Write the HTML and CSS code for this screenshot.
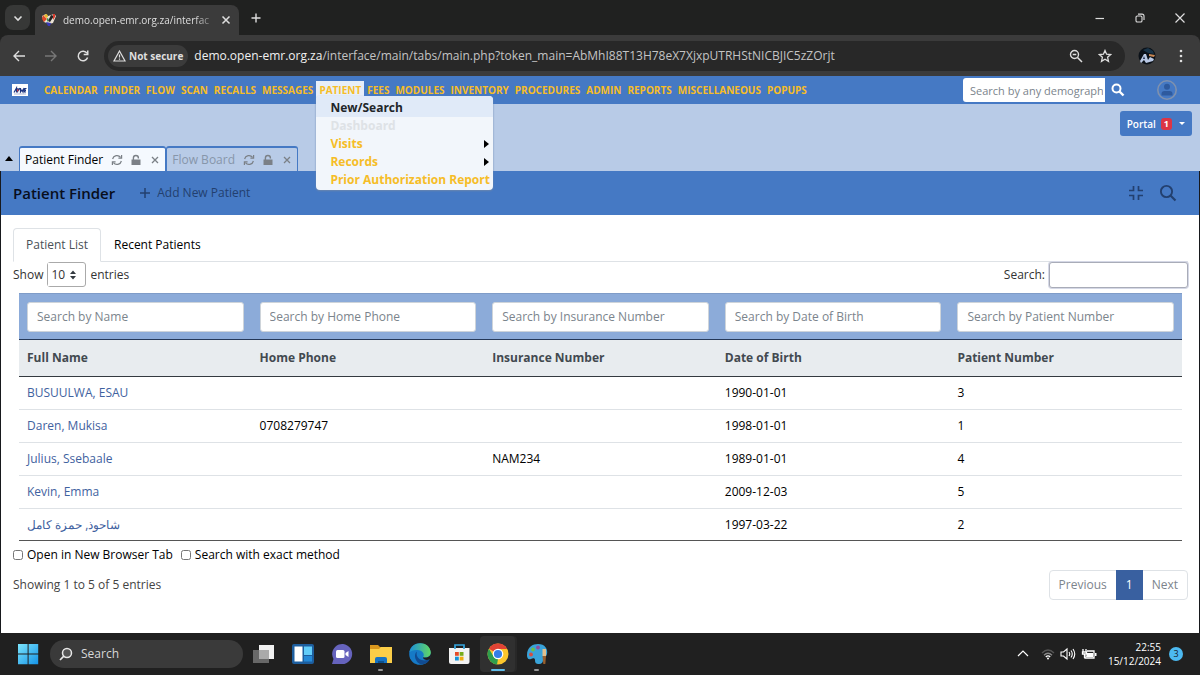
FILE: index.html
```html
<!DOCTYPE html>
<html lang="en">
<head>
<meta charset="utf-8">
<title>OpenEMR - Patient Finder</title>
<link rel="stylesheet" href="styles.css">
</head>
<body>
<svg class="defs" aria-hidden="true">
  <symbol id="i-sync" viewBox="0 0 12 12"><g fill="none" stroke="currentColor" stroke-width="1.2"><path d="M1.6 5A4.5 4.5 0 0 1 9.6 3.4M10.4 7A4.5 4.5 0 0 1 2.4 8.6"/><path d="M10.6 1v3.2H7.4M1.4 11V7.8h3.2"/></g></symbol>
  <symbol id="i-unlock" viewBox="0 0 12 12"><path d="M1.500 5.500h9V11h-9z" fill="currentColor"/><path d="M3.400 6V4a2.500 2.500 0 0 1 5 0v.600" fill="none" stroke="currentColor" stroke-width="1.400"/></symbol>
  <symbol id="i-x" viewBox="0 0 12 12"><path d="M3 3l6 6M9 3L3 9" stroke="currentColor" stroke-width="1.300"/></symbol>
</svg>

<header class="browser">
  <div class="tabstrip">
    <button class="tab-list" aria-label="Search tabs"><svg width="10" height="10" viewBox="0 0 10 10"><path d="M1.500 3.500L5 7l3.500-3.500" fill="none" stroke="currentColor" stroke-width="1.600"/></svg></button>
    <div class="browser-tab">
      <svg class="favicon" width="14" height="14" viewBox="0 0 14 14"><path d="M0 3l4-2 2 2 6-2 2 2-3 7-4 1-5-2z" fill="#e9e2d4"/><path d="M1 2l4 4-3 3-2-3z" fill="#df4a28"/><path d="M2 2l3-1 1 3-2 1z" fill="#e7b929"/><path d="M9 2l3 1-4 6-2-1z" fill="#222"/><path d="M4 9l5 1-1 3-2 0z" fill="#3838b6"/><path d="M5 5l2 1-2 3z" fill="#369759"/><path d="M11 1h2v3l-2 3z" fill="#d93c2d"/></svg>
      <span class="tab-title">demo.open-emr.org.za/interfac</span>
      <button class="plain" aria-label="Close tab"><svg width="14" height="14"><use href="#i-x"/></svg></button>
    </div>
    <button class="plain new-tab" aria-label="New tab"><svg width="12" height="12" viewBox="0 0 12 12"><path d="M6 1.500v9M1.500 6h9" stroke="currentColor" stroke-width="1.400"/></svg></button>
    <div class="window-buttons">
      <button class="plain" aria-label="Minimize"><svg width="12" height="12" viewBox="0 0 12 12"><path d="M1.500 6.500h8.500" stroke="currentColor" stroke-width="1.200"/></svg></button>
      <button class="plain" aria-label="Restore"><svg width="12" height="12" viewBox="0 0 12 12"><rect x="2" y="4" width="6" height="6" rx="1.300" fill="none" stroke="currentColor" stroke-width="1.100"/><path d="M4 2.100h4a2 2 0 0 1 2 2V8" fill="none" stroke="currentColor" stroke-width="1.100"/></svg></button>
      <button class="plain" aria-label="Close"><svg width="12" height="12" viewBox="0 0 12 12"><path d="M1.500 1.500l9 9M10.500 1.500l-9 9" stroke="currentColor" stroke-width="1.200"/></svg></button>
    </div>
  </div>
  <div class="toolbar">
    <button class="plain" aria-label="Back"><svg width="14" height="14" viewBox="0 0 14 14"><path d="M13 7H2.500M7 2L2 7l5 5" fill="none" stroke="currentColor" stroke-width="1.400"/></svg></button>
    <button class="plain dim" aria-label="Forward"><svg width="14" height="14" viewBox="0 0 14 14"><path d="M1 7h10.500M7 2l5 5-5 5" fill="none" stroke="currentColor" stroke-width="1.400"/></svg></button>
    <button class="plain" aria-label="Reload"><svg width="14" height="14" viewBox="0 0 14 14"><path d="M11.600 8.500a4.800 4.800 0 1 1-.6-4.300" fill="none" stroke="currentColor" stroke-width="1.500"/><path d="M12.500 1.500v4.800H7.700V4.800H11V1.500z" fill="currentColor"/></svg></button>
    <div class="omnibox">
      <button class="secure"><svg width="13" height="12" viewBox="0 0 13 12"><path d="M6.500 1L12 11H1zM6.500 4.500v3M6.500 8.500v1.300" fill="none" stroke="currentColor" stroke-width="1.200"/></svg>Not secure</button>
      <span class="url"><b>demo.open-emr.org.za</b>/interface/main/tabs/main.php?token_main=AbMhI88T13H78eX7XjxpUTRHStNICBJIC5zZOrjt</span>
      <button class="plain" aria-label="Zoom"><svg width="14" height="14" viewBox="0 0 14 14"><circle cx="5.500" cy="5.500" r="4" fill="none" stroke="currentColor" stroke-width="1.400"/><path d="M8.500 8.500l4.500 4.500M3.700 5.500h3.600" stroke="currentColor" stroke-width="1.500"/></svg></button>
      <button class="plain" aria-label="Bookmark"><svg width="14" height="14" viewBox="0 0 14 14"><path d="M7 1.500l1.600 3.700 4 .4-3 2.700.9 4L7 10.200l-3.500 2.100.9-4-3-2.700 4-.4z" fill="none" stroke="currentColor" stroke-width="1.300"/></svg></button>
    </div>
    <button class="plain" aria-label="Profile"><svg width="18" height="18" viewBox="0 0 18 18"><circle cx="9" cy="9" r="8.500" fill="#0b1118"/><path d="M5 3l5-2 5 3 1 3-6-1z" fill="#193347"/><path d="M11 7l6 1-1 2-5-1z" fill="#c68653"/><path d="M2 14l4-7h2l2 6 2-3 4 2-1 2-7 2-2-3-3 3z" fill="#b9c8e4"/><path d="M6 9l1 3H5z" fill="#1b2846"/></svg></button>
    <button class="plain" aria-label="Menu"><svg width="14" height="14" viewBox="0 0 14 14" fill="currentColor"><circle cx="7" cy="2" r="1.300"/><circle cx="7" cy="7" r="1.300"/><circle cx="7" cy="12" r="1.300"/></svg></button>
  </div>
</header>

<div class="app">
  <nav class="main-nav">
    <svg class="logo" width="16" height="12" viewBox="0 0 16 12"><path d="M0 0h16v12H0z" fill="#fff"/><g stroke="#1b3480" stroke-width="1.200" fill="none"><path d="M2 8.500L4.500 4v4.500M6 4L5.500 8.500M8 4L6 7M8.500 4v4l1.500-2 1 2L12 4M14.500 4.500H13L12.500 8H14M13 6.300h1"/></g><path d="M5 5l2 1-2 2z" fill="#c83c44"/><path d="M2 10h12" stroke="#8b99c1" stroke-width=".700"/></svg>
    <ul class="menu">
      <li><button>CALENDAR</button></li><li><button>FINDER</button></li><li><button>FLOW</button></li><li><button>SCAN</button></li><li><button>RECALLS</button></li><li><button>MESSAGES</button></li>
      <li class="open"><button>PATIENT</button>
        <ul class="dropdown">
          <li class="hover"><button>New/Search</button></li>
          <li><button disabled>Dashboard</button></li>
          <li class="more"><button>Visits</button></li>
          <li class="more"><button>Records</button></li>
          <li><button>Prior Authorization Report</button></li>
        </ul>
      </li>
      <li><button>FEES</button></li><li><button>MODULES</button></li><li><button>INVENTORY</button></li><li><button>PROCEDURES</button></li><li><button>ADMIN</button></li><li><button>REPORTS</button></li><li><button>MISCELLANEOUS</button></li><li><button>POPUPS</button></li>
    </ul>
    <form class="global-search">
      <input type="text" placeholder="Search by any demograph" aria-label="Search by any demographics">
      <button class="plain" type="button" aria-label="Search"><svg width="14" height="14" viewBox="0 0 14 14"><circle cx="5.500" cy="5.500" r="4" fill="none" stroke="#fff" stroke-width="2"/><path d="M8.500 8.500l4 4" stroke="#fff" stroke-width="2.400"/></svg></button>
    </form>
    <button class="plain" aria-label="User"><svg width="20" height="20" viewBox="0 0 20 20"><circle cx="10" cy="10" r="9.200" fill="#4579c4" stroke="#7f91ae" stroke-width="1.600"/><circle cx="10" cy="6.800" r="3" fill="#2e5a9e"/><path d="M4.500 15.500v-1.500q0-3 3-3h5q3 0 3 3v1.500z" fill="#2e5a9e"/></svg></button>
  </nav>

  <div class="attendant"><button class="portal">Portal <span class="badge">1</span><i class="caret"></i></button></div>

  <div class="frame-tabs">
    <i class="collapse"></i>
    <div class="frame-tab active"><span>Patient Finder</span><svg width="12" height="12"><use href="#i-sync"/></svg><svg width="12" height="12"><use href="#i-unlock"/></svg><svg width="12" height="12"><use href="#i-x"/></svg></div>
    <div class="frame-tab"><span>Flow Board</span><svg width="12" height="12"><use href="#i-sync"/></svg><svg width="12" height="12"><use href="#i-unlock"/></svg><svg width="12" height="12"><use href="#i-x"/></svg></div>
  </div>

  <main class="frame">
    <div class="heading">
      <h1>Patient Finder</h1>
      <button class="add"><svg width="12" height="12" viewBox="0 0 12 12"><path d="M6 1v10M1 6h10" stroke="currentColor" stroke-width="1.500"/></svg>Add New Patient</button>
      <button class="plain compress" aria-label="Compress"><svg width="14" height="14" viewBox="0 0 14 14"><path d="M0 4.500h4.500V0M9.500 0v4.500H14M0 9.500h4.500V14M14 9.500H9.500V14" fill="none" stroke="currentColor" stroke-width="1.700"/></svg></button>
      <button class="plain" aria-label="Search"><svg width="18" height="18" viewBox="0 0 18 18"><circle cx="7.500" cy="7.500" r="5.600" fill="none" stroke="currentColor" stroke-width="1.900"/><path d="M11.500 11.500l5 5" stroke="currentColor" stroke-width="2.200"/></svg></button>
    </div>
    <div class="content">
      <div class="list-tabs"><button class="active">Patient List</button><button>Recent Patients</button></div>
      <div class="controls">
        <label>Show <span class="length"><select><option>10</option></select><svg width="8" height="10" viewBox="0 0 8 10"><path d="M1 4l3-3.500L7 4zM1 6l3 3.500L7 6z" fill="#343a40"/></svg></span> entries</label>
        <label class="filter">Search: <input type="text"></label>
      </div>
      <table>
        <thead>
          <tr class="filters">
            <th><input type="text" placeholder="Search by Name" aria-label="Search by Name"></th>
            <th><input type="text" placeholder="Search by Home Phone" aria-label="Search by Home Phone"></th>
            <th><input type="text" placeholder="Search by Insurance Number" aria-label="Search by Insurance Number"></th>
            <th><input type="text" placeholder="Search by Date of Birth" aria-label="Search by Date of Birth"></th>
            <th><input type="text" placeholder="Search by Patient Number" aria-label="Search by Patient Number"></th>
          </tr>
          <tr class="titles"><th>Full Name</th><th>Home Phone</th><th>Insurance Number</th><th>Date of Birth</th><th>Patient Number</th></tr>
        </thead>
        <tbody>
          <tr><td><a href="#">BUSUULWA, ESAU</a></td><td></td><td></td><td>1990-01-01</td><td>3</td></tr>
          <tr><td><a href="#">Daren, Mukisa</a></td><td>0708279747</td><td></td><td>1998-01-01</td><td>1</td></tr>
          <tr><td><a href="#">Julius, Ssebaale</a></td><td></td><td>NAM234</td><td>1989-01-01</td><td>4</td></tr>
          <tr><td><a href="#">Kevin, Emma</a></td><td></td><td></td><td>2009-12-03</td><td>5</td></tr>
          <tr><td><a href="#" lang="ar">شاحوذ, حمزة كامل</a></td><td></td><td></td><td>1997-03-22</td><td>2</td></tr>
        </tbody>
      </table>
      <div class="checks">
        <label><input type="checkbox">Open in New Browser Tab</label>
        <label><input type="checkbox">Search with exact method</label>
      </div>
      <div class="summary">
        <span>Showing 1 to 5 of 5 entries</span>
        <div class="pages"><button>Previous</button><button class="current">1</button><button>Next</button></div>
      </div>
    </div>
  </main>
</div>

<footer class="taskbar">
  <button class="plain" aria-label="Start"><svg width="22" height="22" viewBox="0 0 22 22"><defs><linearGradient id="win" x1="0" y1="0" x2="1" y2="1"><stop offset="0" stop-color="#7be4fb"/><stop offset="1" stop-color="#1593e8"/></linearGradient></defs><path d="M1 1h9.600v9.600H1zM11.600 1h9.600v9.600h-9.600zM1 11.600h9.600v9.600H1zM11.600 11.600h9.600v9.600h-9.600z" fill="url(#win)"/></svg></button>
  <button class="task-search"><svg width="14" height="14" viewBox="0 0 14 14"><circle cx="8" cy="6" r="4.500" fill="#555" stroke="#e8e8e8" stroke-width="1.500"/><path d="M4.800 9.200L1 13" stroke="#e8e8e8" stroke-width="1.700"/></svg>Search</button>
  <div class="apps">
    <button class="plain" aria-label="Task view"><svg width="24" height="24" viewBox="0 0 24 24"><path d="M7 3h15v14H7z" fill="#f1f1f1"/><path d="M1 8h16v13H1z" fill="#767676" opacity=".85"/><path d="M7 8h10v9H7z" fill="#aaa"/></svg></button>
    <button class="plain" aria-label="Widgets"><svg width="24" height="24" viewBox="0 0 24 24"><rect x="1" y="2" width="22" height="20" rx="2" fill="#1d5e9e"/><path d="M3.500 4.500h8v15h-8z" fill="#fff"/><path d="M13 4.500h8V13h-8z" fill="#62cdf9"/><path d="M13 14h8v5.500h-8z" fill="#258ad8"/></svg></button>
    <button class="plain" aria-label="Chat"><svg width="24" height="24" viewBox="0 0 24 24"><path d="M2 22l1.500-5A10 10 0 1 1 12 22z" fill="#6663bd"/><rect x="6" y="8" width="8.500" height="8" rx="1.500" fill="#fff"/><path d="M15.500 11l3-2v6l-3-2z" fill="#fff"/></svg></button>
    <button class="plain running" aria-label="File Explorer"><svg width="24" height="24" viewBox="0 0 24 24"><path d="M1 3h8l2 2h10v6H1z" fill="#d9971d"/><path d="M1 7h9l2-2h11v16H1z" fill="#fbce48"/><path d="M6 21v-4q0-2 2-2h8q2 0 2 2v4z" fill="#1673c4"/><path d="M9 19h6v2H9z" fill="#0c518f"/></svg></button>
    <button class="plain" aria-label="Edge"><svg width="24" height="24" viewBox="0 0 24 24"><defs><linearGradient id="edge" x1="0" y1="0" x2="1" y2="0"><stop offset="0" stop-color="#1b8fd8"/><stop offset="1" stop-color="#61d764"/></linearGradient></defs><circle cx="12" cy="12" r="10.800" fill="#167ac7"/><path d="M1.400 10.500C3-2 22-2 22.800 10.500c.2 4-3.500 5.500-7.800 4.800 1.500-2 1-6-4-7C7 7.600 3 8.500 1.400 10.500z" fill="url(#edge)"/><path d="M9 9.500c-4 2.500-2 12 5 13 4-.5 6.500-2.500 8-5.500-6 3-11.500 1-13-3-.5-2-.4-3 0-4.500z" fill="#114b91"/><path d="M15 15.300c4 1 8-.8 8-4.800.2 3.500-.2 5-1 6.500-2.500 2-7 1-7-1.700z" fill="#202020"/></svg></button>
    <button class="plain" aria-label="Store"><svg width="24" height="24" viewBox="0 0 24 24"><path d="M8 7V3h9v4" fill="none" stroke="#34a4dc" stroke-width="1.700"/><path d="M2 6h20.500v14q0 2-2 2H4q-2 0-2-2z" fill="#f3f3f3"/><path d="M8 7V5.500M17 7V5.500" stroke="#34a4dc" stroke-width="1.700"/><path d="M8 10h3.800v3.800H8z" fill="#e64c27"/><path d="M12.700 10h3.800v3.800h-3.800z" fill="#78ac1b"/><path d="M8 14.700h3.800v3.800H8z" fill="#1794d8"/><path d="M12.700 14.700h3.800v3.800h-3.800z" fill="#f0ac12"/></svg></button>
    <button class="plain focused" aria-label="Chrome"><svg width="24" height="24" viewBox="0 0 24 24"><circle cx="12" cy="12" r="10.500" fill="#fbc62c"/><path d="M12 12L2.900 6.800A10.500 10.500 0 0 1 21.100 6.800L21 7H12z" fill="#e24335"/><path d="M2.900 6.800L7.700 14.500 12 17l-1 5.500A10.500 10.500 0 0 1 2.900 6.800z" fill="#2e9e4d"/><circle cx="12" cy="12" r="5.300" fill="#fff"/><circle cx="12" cy="12" r="4.100" fill="#347ee6"/></svg></button>
    <button class="plain running" aria-label="Paint"><svg width="24" height="24" viewBox="0 0 24 24"><path d="M2 13C2 5 8 2 13 2c7 0 10 5 9 10-1 4-4 4-4 6s-1 4-4 4c-3 0-4-1-4-4 0-2-2-2-4-1-3 1-4-1-4-4z" fill="#39a3d9"/><circle cx="8" cy="7.500" r="1.900" fill="#6bbe4a"/><circle cx="6" cy="12.500" r="1.900" fill="#d64d3e"/><circle cx="13" cy="5.500" r="1.900" fill="#8e4f9d"/><path d="M17.500 7H21v7h-3.500z" fill="#e3c08c"/><path d="M17.500 14H21l-.7 8h-2z" fill="#99602e"/></svg></button>
  </div>
  <div class="tray">
    <svg width="12" height="12" viewBox="0 0 12 12"><path d="M1 8l5-5 5 5" fill="none" stroke="#fff" stroke-width="1.200"/></svg>
    <svg class="wifi" width="14" height="14" viewBox="0 0 14 14" fill="none" stroke-width="1.300"><path d="M1 6q6-6 12 0" stroke="#555"/><path d="M3 8.200q4-4 8 0" stroke="#888"/><path d="M4.800 10q2.200-2.200 4.400 0" stroke="#fff"/><circle cx="7" cy="11.500" r="1" fill="#fff" stroke="none"/></svg>
    <svg width="16" height="14" viewBox="0 0 16 14" fill="none" stroke="#fff" stroke-width="1.100"><path d="M1 5h2.500L7 2v10L3.500 9H1zM9 5q1.500 2 0 4M11 3.500q2.500 3.500 0 7M13 2q3.500 5 0 10"/></svg>
    <svg width="16" height="14" viewBox="0 0 16 14"><path d="M6 4h7v7H4V8M2 2v3M5 2v3M1.500 5h4v2h-4zM3.500 7v4" fill="none" stroke="#fff" stroke-width="1.300"/><path d="M6 6h6v4H5zM14 6h1.500v3H14z" fill="#fff"/></svg>
    <div class="clock"><span>22:55</span><span>15/12/2024</span></div>
    <span class="notices">3</span>
  </div>
</footer>
</body>
</html>
```
FILE: styles.css
```css
* { box-sizing: border-box; }
body {
  margin: 0;
  min-height: 100vh;
  display: flex;
  flex-direction: column;
  background: #202120;
  color: #212529;
  font: 12px/18px "Open Sans", "Noto Sans", sans-serif;
}
button, input, select { font: inherit; color: inherit; }
button { background: none; border: 0; padding: 0; white-space: nowrap; }
svg { display: block; flex: none; }
ul { list-style: none; margin: 0; padding: 0; }
.defs { position: absolute; width: 0; height: 0; }
.plain { display: flex; align-items: center; justify-content: center; }

/* Browser window */
.browser { color: #dedede; background: #202120; }
.tabstrip { display: flex; align-items: center; height: 35px; padding-left: 5px; }
.tab-list { display: grid; place-items: center; width: 25px; height: 25px; border-radius: 8px; background: #373837; }
.browser-tab {
  align-self: flex-end;
  display: flex; align-items: center;
  width: 204px; height: 30px;
  margin-left: 5px; padding: 0 6px 0 7px; gap: 7px;
  border-radius: 8px 8px 0 0;
  background: #3b3b3b;
  font-size: 10px;
}
.tab-title {
  flex: 1; white-space: nowrap;
  -webkit-mask-image: linear-gradient(90deg, #000 88%, rgba(0, 0, 0, .3));
  mask-image: linear-gradient(90deg, #000 88%, rgba(0, 0, 0, .3));
}
.new-tab { margin-left: 11px; }
.window-buttons { display: flex; gap: 28px; margin-left: auto; padding-right: 14px; }
.toolbar {
  display: flex; align-items: center; gap: 18px;
  height: 41px; padding: 0 12px;
  border-radius: 8px 8px 0 0;
  background: #3b3b3b;
}
.dim { color: #777; }
.omnibox {
  flex: 1; min-width: 0;
  display: flex; align-items: center; gap: 15px;
  height: 30px; padding: 0 13px 0 4px;
  margin-left: -4px; margin-right: -5px;
  border-radius: 15px;
  background: #282828;
}
.secure {
  display: flex; align-items: center; gap: 3px;
  height: 22px; padding: 0 5px;
  margin-right: -9px;
  border-radius: 11px;
  background: #3b3b3b;
  font-size: 10px; font-weight: 700;
}
.url { flex: 1; overflow: hidden; white-space: nowrap; color: #c4c4c4; }
.url b { font-weight: 400; color: #f0f0f0; }

/* Application bar */
.app { flex: 1; display: flex; flex-direction: column; background: #b8cbe7; }
.main-nav {
  display: flex; align-items: center;
  height: 28px; padding: 0 23px 0 12px;
  background: #4579c4;
}
.menu { display: flex; margin-left: 13px; font-size: 10px; font-weight: 700; color: #f6bd27; }
.menu > li { position: relative; }
.menu > li > button { display: block; padding: 0 3px; height: 18px; }
.menu > .open { background: #e6eef9; }
.dropdown {
  position: absolute; z-index: 2; left: 0; top: 15px;
  min-width: 177px; padding-bottom: 1px;
  border-radius: 4px;
  background: #f2f6fb;
  box-shadow: 0 1px 2px #6a86ad;
  font-size: 12px;
  overflow: hidden;
}
.dropdown button { display: block; height: 18px; line-height: 18px; padding: 0 2px 0 14px; }
.dropdown .hover { padding-top: 3px; background: #e0eaf8; color: #212529; }
.dropdown button:disabled { color: #dee2e6; }
.dropdown .more { display: flex; align-items: center; justify-content: space-between; padding-right: 4px; }
.dropdown .more::after { content: ""; border: solid transparent; border-width: 4px 0 4px 5px; border-left-color: #000; }
.global-search { display: flex; margin-left: auto; gap: 6px; margin-right: 32px; }
.global-search input {
  width: 142px; height: 24px; padding: 0 2px 0 7px;
  border: 0; border-radius: 3px 0 0 3px; background: #fff;
  font-size: 11px;
}
input::placeholder { color: #7b848c; opacity: 1; }
.attendant { display: flex; justify-content: flex-end; height: 42px; padding: 7px 8px 0 0; }
.portal {
  display: flex; align-items: center; gap: 5px;
  height: 25px; padding: 0 7px;
  border-radius: 3px;
  background: #4579c4; color: #fff;
  font-size: 10px; font-weight: 600;
}
.badge { padding: 0 3px; border-radius: 3px; background: #dc3545; font-size: 9px; line-height: 12px; font-weight: 700; }
.caret { border: solid transparent; border-width: 3px 3px 0; border-top-color: #fff; margin-left: 2px; }
.frame-tabs { display: flex; height: 25px; padding-left: 5px; }
.collapse { align-self: center; margin-right: 6px; border: solid transparent; border-width: 0 4px 5px; border-bottom-color: #000; }
.frame-tab {
  display: flex; align-items: center; gap: 7px;
  padding: 0 4px 0 5px;
  border: 1px solid #4579c4; border-top-width: 2px; border-bottom: 0;
  border-radius: 3px 3px 0 0;
  color: #8796aa;
}
.frame-tab span { margin-right: 1px; }
.frame-tab.active { background: #f5f9fe; }
.frame-tab.active span { color: #000; }
.frame-tab svg { color: #7b8086; }

/* Patient finder */
.frame { flex: 1; border: solid #17191d; border-width: 0 1px; background: #fff; }
.heading {
  display: flex; align-items: center;
  height: 44px; padding: 0 22px 0 12px;
  background: #4579c4; color: #23406f;
}
h1 { margin: 0 24px 0 0; color: #080e1c; font-size: 15px; font-weight: 600; }
.add { display: flex; align-items: center; gap: 6px; }
.compress { margin-left: auto; margin-right: 16px; }
.content { padding: 13px 11px 0 12px; }
.list-tabs { display: flex; height: 34px; border-bottom: 1px solid #dee2e6; color: #000; }
.list-tabs button { padding: 0 13px; }
.list-tabs .active {
  height: 34px; padding: 0 12px;
  border: 1px solid #dee2e6; border-bottom-color: #fff; border-radius: 4px 4px 0 0;
  color: #495057;
}
.controls { display: flex; justify-content: space-between; color: #333; }
.controls label { display: flex; align-items: center; gap: 4px; height: 25px; }
.length { display: flex; align-items: center; border: 1px solid #aaa; border-radius: 3px; padding-right: 8px; }
select { appearance: none; width: 21px; height: 23px; padding: 0 0 0 3px; border: 0; background: #fff; }
.filter input { width: 139px; height: 26px; border: 1px solid #a9acb8; border-radius: 3px; box-shadow: 0 0 0 1px #d5d8e6; }
table {
  width: calc(100% - 12px); margin: 6px 6px 0;
  table-layout: fixed; border-collapse: separate; border-spacing: 0;
  border-bottom: 1px solid #555;
  color: #000;
}
th, td { padding: 0 8px; text-align: left; }
.filters th { height: 47px; background: #8cabd9; border-top: 1px solid #7f9cc8; border-bottom: 1px solid #253858; font-weight: 400; }
.filters input { display: block; width: 100%; height: 30px; padding: 0 9px; border: 1px solid #ced4da; border-radius: 3px; background: #fff; }
.titles th { height: 37px; background: #e8ecef; border-bottom: 1px solid #343a40; color: #42494f; font-weight: 700; }
td { height: 33px; border-bottom: 1px solid #dee2e6; }
tbody tr:last-child td { height: 31px; border: 0; }
a { color: #3f62a0; text-decoration: none; }
.checks { display: flex; gap: 8px; margin-top: 5px; color: #000; }
.checks label { display: flex; align-items: center; gap: 4px; }
.checks input { width: 10px; height: 10px; margin: 0; }
.summary { display: flex; align-items: center; justify-content: space-between; margin: 6px 0 33px; color: #444; }
.pages { display: flex; height: 30px; border: 1px solid #dee2e6; border-radius: 4px; color: #7c848c; }
.pages button { padding: 0 9px; }
.pages .current { margin: -1px 0; padding: 0 10px; background: #3960a0; color: #fff; }

/* Taskbar */
.taskbar { display: flex; align-items: center; height: 42px; padding: 0 17px; background: #202020; color: #fff; }
.task-search {
  display: flex; align-items: center; gap: 8px;
  width: 193px; height: 28px; margin-left: 11px; padding: 0 9px;
  border-radius: 14px; background: #3a3a3a; color: #d8d8d8;
}
.apps { display: flex; gap: 4px; margin-left: 3px; }
.apps button { position: relative; width: 35px; height: 36px; border-radius: 4px; }
.apps .focused { background: #303030; box-shadow: 2px 0 0 #282828; }
.apps .running::after, .apps .focused::after {
  content: ""; position: absolute; bottom: 1px;
  width: 5px; height: 2px; border-radius: 1px; background: #999;
}
.apps .focused::after { width: 14px; background: #60bce9; }
.tray { display: flex; align-items: center; gap: 5px; margin-left: auto; }
.wifi { margin-left: 7px; }
.clock { display: flex; flex-direction: column; align-items: flex-end; margin-left: 6px; font-size: 10px; line-height: 14px; }
.notices { width: 14px; height: 14px; margin-left: 3px; border-radius: 7px; background: #4cb9f0; color: #17202a; font-size: 9px; line-height: 14px; text-align: center; }
```
